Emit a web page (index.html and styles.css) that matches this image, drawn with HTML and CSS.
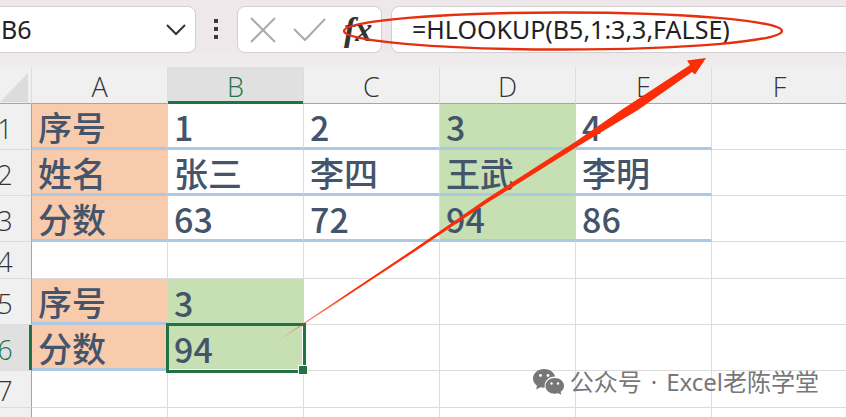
FILE: index.html
```html
<!DOCTYPE html>
<html lang="zh-CN">
<head>
<meta charset="utf-8">
<title>HLOOKUP</title>
<link rel="stylesheet" href="styles.css">
</head>
<body>
<main class="window">
  <header class="bar">
    <div class="box name-box">
      <input class="name" type="text" value="B6" aria-label="名称框">
      <button class="tool" type="button" aria-label="展开名称框">
        <svg width="22" height="14" viewBox="0 0 22 14"><path d="M2 2l9 9 9-9" fill="none" stroke="#333" stroke-width="2"/></svg>
      </button>
    </div>
    <svg class="dots" width="4" height="22" viewBox="0 0 4 22"><path d="M0 0h4v4H0zM0 8h4v4H0zM0 16h4v4H0z" fill="#3a383a"/></svg>
    <div class="box actions">
      <button class="tool" type="button" aria-label="取消">
        <svg width="26" height="26" viewBox="0 0 26 26"><path d="M1 1l24 24M25 1L1 25" fill="none" stroke="#ababab" stroke-width="2"/></svg>
      </button>
      <button class="tool" type="button" aria-label="输入">
        <svg width="34" height="26" viewBox="0 0 34 26"><path d="M1 12l11 11L32 2" fill="none" stroke="#ababab" stroke-width="2"/></svg>
      </button>
      <button class="tool fx" type="button" aria-label="插入函数">fx</button>
    </div>
    <div class="box formula-box">
      <input class="formula" type="text" value="=HLOOKUP(B5,1:3,3,FALSE)" aria-label="编辑栏">
    </div>
  </header>

  <table class="sheet">
    <colgroup><col class="c-head"><col class="c"><col class="c"><col class="c"><col class="c"><col class="c"><col></colgroup>
    <thead>
      <tr>
        <th class="corner"><svg width="28" height="29" viewBox="0 0 28 29"><path d="M28 0v29H0z" fill="#dcdcdc"/></svg></th>
        <th>A</th><th class="active">B</th><th>C</th><th>D</th><th>E</th><th>F</th>
      </tr>
    </thead>
    <tbody>
      <tr class="tall"><th>1</th><td class="rule orange">序号</td><td class="rule">1</td><td class="rule">2</td><td class="rule green">3</td><td class="rule">4</td><td></td></tr>
      <tr class="tall"><th>2</th><td class="rule orange">姓名</td><td class="rule">张三</td><td class="rule">李四</td><td class="rule green">王武</td><td class="rule">李明</td><td></td></tr>
      <tr class="tall"><th>3</th><td class="rule orange">分数</td><td class="rule">63</td><td class="rule">72</td><td class="rule green">94</td><td class="rule">86</td><td></td></tr>
      <tr class="short"><th>4</th><td></td><td></td><td></td><td></td><td></td><td></td></tr>
      <tr class="tall"><th>5</th><td class="rule orange">序号</td><td class="green">3</td><td></td><td></td><td></td><td></td></tr>
      <tr class="tall"><th class="active">6</th><td class="rule orange">分数</td><td class="green selected">94<span class="handle"></span></td><td></td><td></td><td></td><td></td></tr>
      <tr class="short"><th>7</th><td></td><td></td><td></td><td></td><td></td><td></td></tr>
      <tr class="short"><th></th><td></td><td></td><td></td><td></td><td></td><td></td></tr>
    </tbody>
  </table>

  <svg class="ink" width="846" height="417" viewBox="0 0 846 417" aria-hidden="true">
    <defs>
      <linearGradient id="fade" gradientUnits="userSpaceOnUse" x1="272" y1="343" x2="350" y2="292">
        <stop offset="0" stop-color="#fb2c08" stop-opacity="0.2"/>
        <stop offset="1" stop-color="#fb2c08"/>
      </linearGradient>
    </defs>
    <ellipse cx="563" cy="31" rx="219" ry="18.5" fill="none" stroke="#e62f0e" stroke-width="2.4"/>
    <path d="M276 342L305 322L414 249L487 198.500L575 142L622 109.500L690 65L687 60.500L706 58L695 74.500L692 72L638 110L575 148L487 203L417 250L305 323.500Z" fill="url(#fade)"/>
  </svg>

  <div class="watermark">
    <svg width="32" height="26" viewBox="0 0 32 26">
      <path d="M11 0C5 0 0 4.200 0 9.500c0 3 1.600 5.500 4 7.200L3.200 20.500l4.300-2.300c1.400.4 2.800.5 4.300.4C10.500 12 16 7.300 22.200 7.500 21 3 16.500 0 11 0z" fill="#777"/>
      <path d="M31 17c0-4.600-4.100-8-9.200-8s-9.300 3.400-9.300 8 4.200 7.700 9.300 7.700c1.200 0 2.300-.2 3.300-.5l3.200 1.600-.7-3C29.700 21.400 31 19.400 31 17z" fill="#777"/>
      <g fill="#fff"><circle cx="7.500" cy="6.500" r="1.400"/><circle cx="15" cy="6.500" r="1.400"/><circle cx="18.500" cy="14.500" r="1.200"/><circle cx="25" cy="14.500" r="1.200"/></g>
    </svg>
    <span class="credit"><span>公众号</span><span>·</span><span>Excel老陈学堂</span></span>
  </div>
</main>
</body>
</html>
```
FILE: styles.css
```css
* { box-sizing: border-box; }

body {
  margin: 0;
  overflow: hidden;
  background: #fff;
  font-family: "Noto Sans CJK SC", sans-serif;
}

.window {
  position: relative;
  height: 100vh;
  overflow: hidden;
}

.bar {
  display: flex;
  align-items: center;
  height: 67px;
  padding: 6px 0 14px;
  background: linear-gradient(#eee8ea 75%, #f0edee);
}

.box {
  display: flex;
  align-items: center;
  height: 47px;
  background: #fff;
  border: 1px solid #d3ced0;
  border-radius: 8px;
}

.name-box {
  width: 206px;
  margin-left: -10px;
  padding: 0 8px 0 10px;
}

.name,
.formula {
  flex: 1;
  min-width: 0;
  padding: 0 0 2px;
  border: 0;
  outline: 0;
  background: none;
  color: #222;
  font-family: "Noto Sans", sans-serif;
  font-size: 25px;
}

.tool {
  display: flex;
  align-items: center;
  padding: 0;
  border: 0;
  background: none;
  color: #333;
}

.dots { margin: 0 19px 0 18px; }

.actions {
  width: 145px;
  gap: 17px;
  padding: 0 8px 0 12px;
}

.fx {
  font-family: "Liberation Serif", serif;
  font-size: 34px;
  font-style: italic;
  font-weight: 700;
  line-height: 40px;
}

.formula-box {
  flex: 1;
  margin: 0 -10px 0 9px;
  padding-left: 20px;
}

.sheet {
  width: calc(100% + 23px);
  margin-left: -21px;
  table-layout: fixed;
  border-collapse: separate;
  border-spacing: 0;
}

.c-head { width: 53px; }
.c { width: 136px; }

.sheet th,
.sheet td {
  padding: 0;
  border-right: 1px solid #dcdcdc;
  border-bottom: 1px solid #dcdcdc;
}

.sheet th {
  background: #f0f0f0;
  color: #333;
  font-family: "Open Sans", sans-serif;
  font-size: 27px;
  font-weight: 300;
}

.sheet thead th {
  height: 37px;
  padding-top: 4px;
  border-bottom-color: #a6a6a6;
  line-height: 32px;
}

.sheet tbody th {
  padding-top: 4px;
  border-right-color: #a6a6a6;
  line-height: 32px;
}

.sheet thead .active {
  background: #e0e0e0;
  color: #217346;
  border-bottom-color: #217346;
  box-shadow: inset 0 -2px #217346;
}

.sheet tbody .active {
  background: #e0e0e0;
  color: #217346;
  border-right-color: #217346;
  box-shadow: inset -2px 0 #217346;
}

.sheet .corner {
  padding-right: 3px;
  text-align: right;
}

.corner svg {
  display: block;
  margin-left: auto;
}

.tall { height: 46px; }
.short { height: 37px; }

.sheet td {
  padding-left: 6px;
  color: #44546a;
  font-size: 34px;
  font-weight: 500;
  white-space: nowrap;
}

.sheet .tall td {
  padding-top: 2px;
  line-height: 41px;
}

.sheet .rule { border-bottom: 3px solid #adc8e3; }

.sheet .orange {
  background: #f8cbad;
  background-clip: padding-box;
  border-right-color: #f8cbad;
}

.sheet .green {
  background: #c6e0b4;
  background-clip: padding-box;
  border-right-color: #c6e0b4;
  border-bottom-color: #c6e0b4;
}

.sheet .rule.green { border-bottom-color: #adc8e3; }

.sheet .selected {
  position: relative;
  border-color: #217346;
  outline: 3px solid #217346;
  outline-offset: -1px;
  box-shadow: inset 0 0 0 1px #fff;
}

.handle {
  position: absolute;
  right: -5px;
  bottom: -5px;
  width: 10px;
  height: 10px;
  background: #217346;
  border: 1px solid #fff;
  z-index: 1;
}

.ink {
  position: absolute;
  top: 0;
  left: 0;
}

.watermark {
  position: absolute;
  right: 27px;
  bottom: 18px;
  display: flex;
  align-items: center;
  gap: 5px;
  color: #777;
  font-family: "Noto Sans", "Noto Sans CJK SC", sans-serif;
  font-size: 24px;
  line-height: 34px;
}

.credit {
  display: flex;
  gap: 9px;
}
```
